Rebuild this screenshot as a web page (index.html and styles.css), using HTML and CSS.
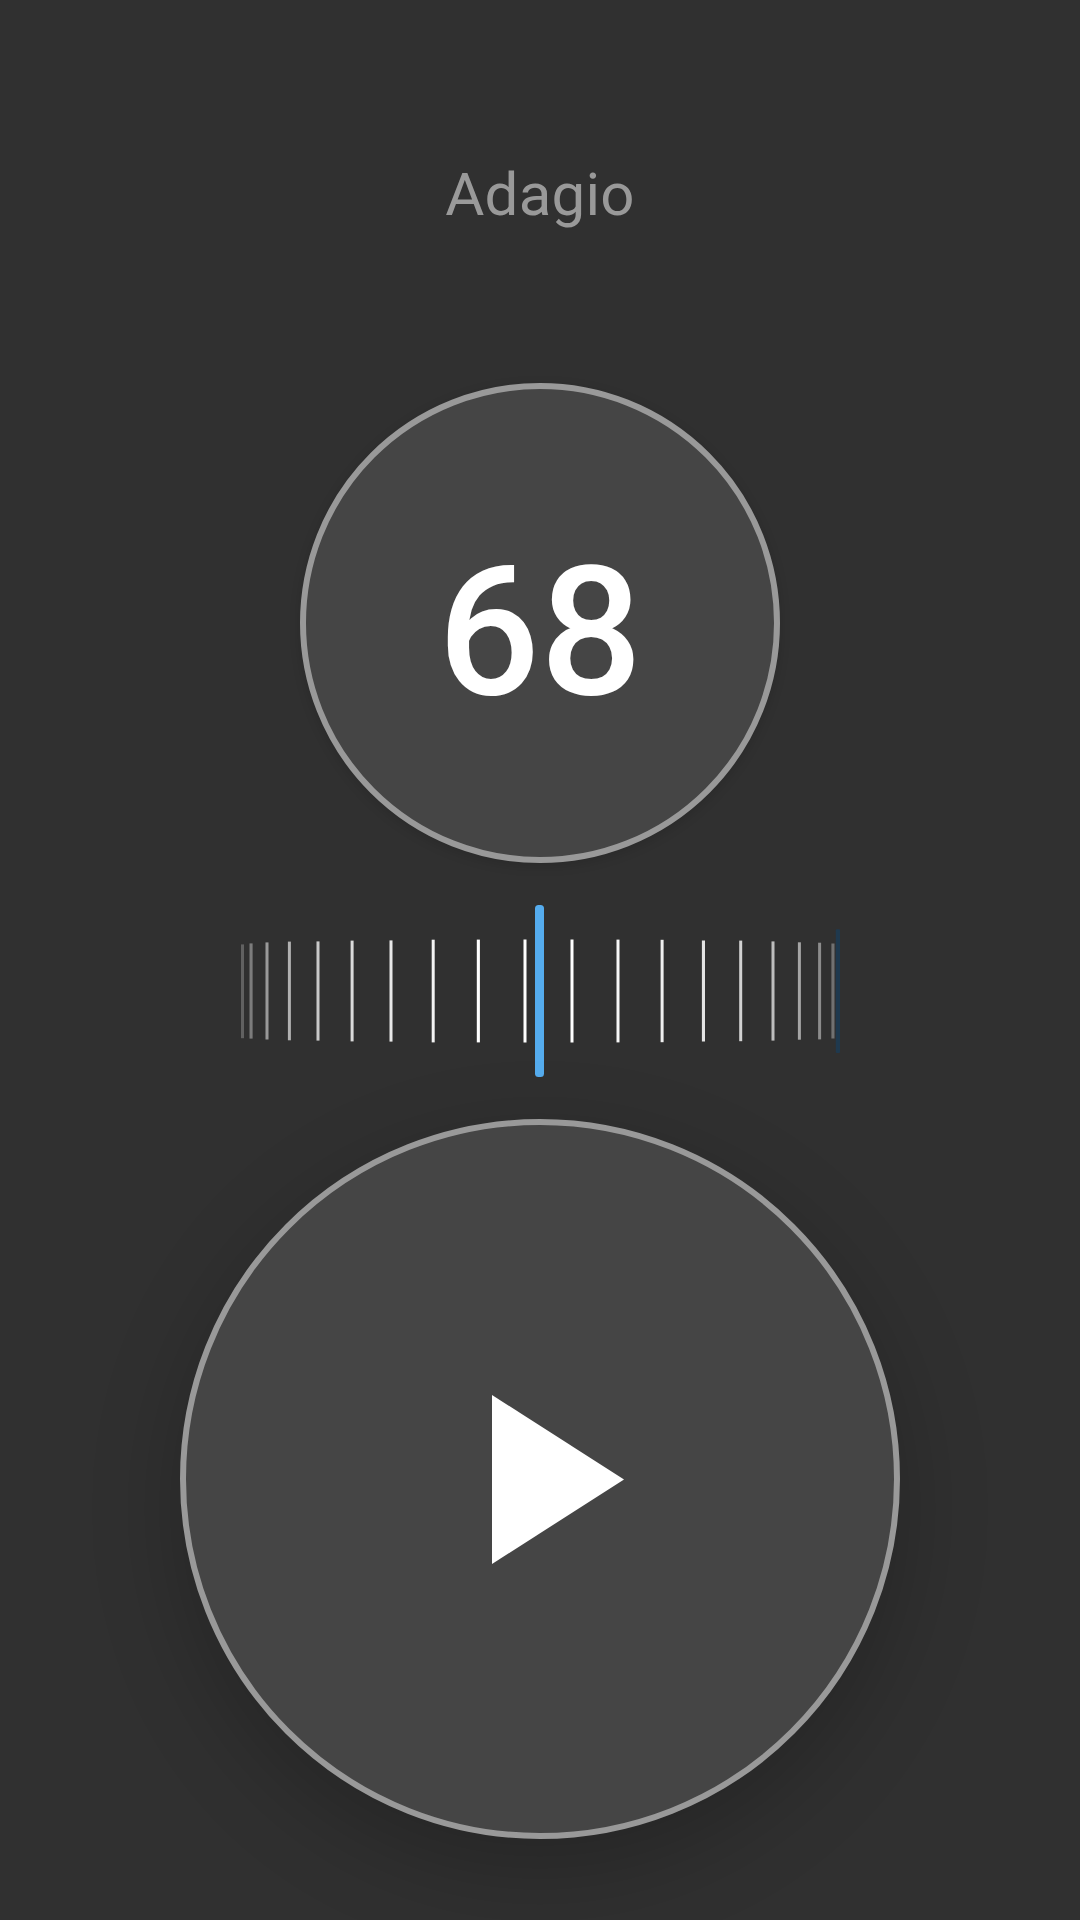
FILE: index.html
```html
<!DOCTYPE html>
<html lang="en">
<head>
<meta charset="utf-8">
<title>Metronome</title>
<link rel="stylesheet" href="styles.css">
</head>
<body>
<main class="metronome">
  <h1 class="tempo-name">Adagio</h1>
  <div class="tempo-value">68</div>
  <svg class="dial" viewBox="240 905 601 172" role="img" aria-label="Tempo dial">
    <rect x="241" y="944.4" width="3" height="93.8" fill="#616161"/>
    <rect x="249.5" y="943.4" width="3.1" height="95.2" fill="#7c7c7c"/>
    <rect x="265.5" y="942.4" width="3" height="97.1" fill="#999"/>
    <rect x="287.9" y="941.6" width="3" height="98.7" fill="#b1b1b1"/>
    <rect x="316.5" y="941.4" width="3" height="99.2" fill="#c8c8c8"/>
    <rect x="350.6" y="940.6" width="3" height="100.8" fill="#dadada"/>
    <rect x="389.5" y="940.4" width="3" height="101.2" fill="#e8e8e8"/>
    <rect x="431.7" y="939.7" width="3" height="102.7" fill="#f3f3f3"/>
    <rect x="476.8" y="939.6" width="3.1" height="102.8" fill="#fff"/>
    <rect x="523.5" y="939.5" width="3" height="103" fill="#fff"/>
    <rect x="570.5" y="939.5" width="3" height="103" fill="#fff"/>
    <rect x="616.5" y="939.6" width="3" height="102.8" fill="#f6f6f6"/>
    <rect x="660.6" y="939.8" width="3" height="102.4" fill="#f0f0f0"/>
    <rect x="701.9" y="940.5" width="3.1" height="101" fill="#e3e3e3"/>
    <rect x="739.2" y="940.6" width="3" height="100.6" fill="#d2d2d2"/>
    <rect x="771.5" y="941.4" width="3" height="99.2" fill="#bdbdbd"/>
    <rect x="797.9" y="942.3" width="3" height="97.4" fill="#a5a5a5"/>
    <rect x="818.1" y="942.7" width="3" height="96.7" fill="#8c8c8c"/>
    <rect x="831.4" y="943.5" width="3.1" height="95" fill="#717171"/>
    <rect x="835.8" y="929.3" width="4.2" height="123.7" rx="1" fill="#1f394e"/>
    <rect x="535" y="905" width="9" height="172" rx="3.5" fill="#55acee"/>
  </svg>
  <button class="play" aria-label="Play">
    <svg class="play-icon" viewBox="0 0 132 169"><path d="M0 0 132 84.5 0 169Z" fill="#fff"/></svg>
  </button>
</main>
</body>
</html>
```
FILE: styles.css
```css
* { box-sizing: border-box; }

body {
  margin: 0;
  background: #303030;
  font-family: Roboto, sans-serif;
}

.metronome {
  display: flex;
  flex-direction: column;
  align-items: center;
  height: 1920px;
  padding-top: 150px;
  overflow: hidden;
}

.tempo-name {
  margin: 0 0 143px;
  color: #999;
  font-size: 60px;
  font-weight: 400;
  letter-spacing: .25px;
  line-height: 90px;
}

.tempo-value {
  display: flex;
  flex: none;
  align-items: center;
  justify-content: center;
  width: 480px;
  height: 480px;
  padding-top: 20px;
  border: 6px solid #999;
  border-radius: 50%;
  background: #454545;
  box-shadow: 0 3px 12px rgba(0, 0, 0, .14);
  color: #fff;
  font-size: 180px;
  font-weight: 500;
  line-height: 1;
}

.dial {
  flex: none;
  align-self: flex-start;
  width: 601px;
  height: 172px;
  margin: 42px 0 42px 240px;
}

.play {
  display: flex;
  flex: none;
  align-items: center;
  justify-content: center;
  width: 720px;
  height: 720px;
  padding: 0 0 0 36px;
  border: 6px solid #999;
  border-radius: 50%;
  background: #454545;
  box-shadow: 0 30px 90px rgba(0, 0, 0, .22);
}

.play-icon {
  width: 132px;
  height: 169px;
  overflow: visible;
  filter: blur(.7px);
}
```
